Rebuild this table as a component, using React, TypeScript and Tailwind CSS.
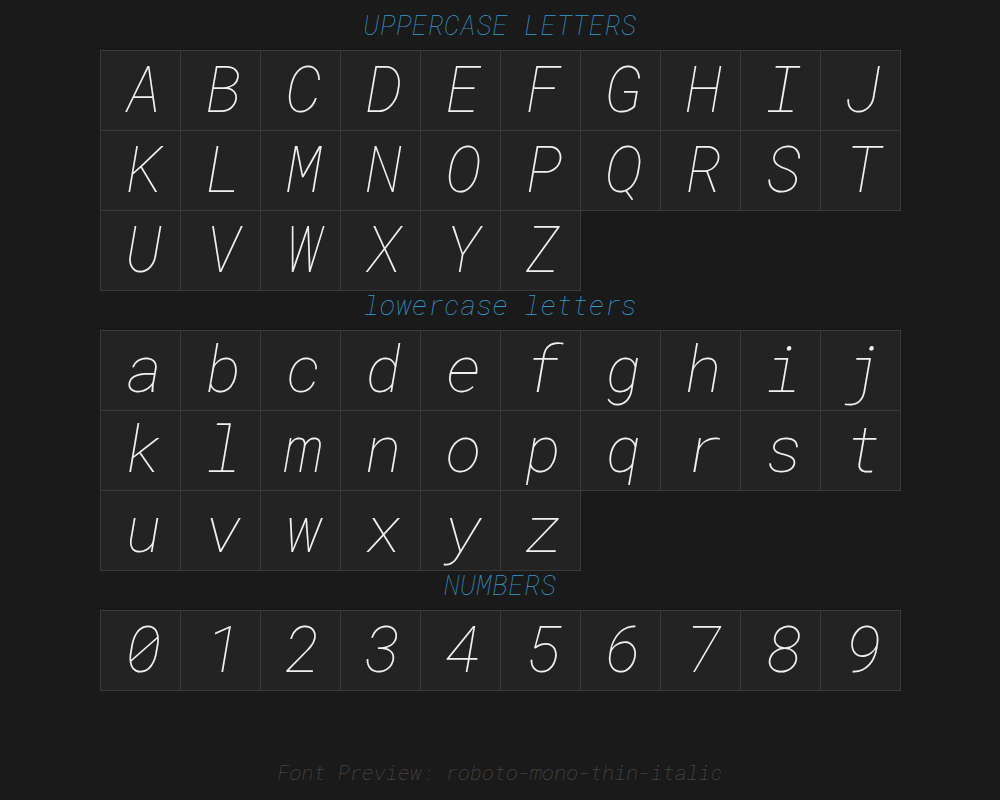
import React from 'react';

const upper = 'ABCDEFGHIJKLMNOPQRSTUVWXYZ'.split('');
const lower = 'abcdefghijklmnopqrstuvwxyz'.split('');
const digits = '0123456789'.split('');

const mono = { fontFamily: "'Roboto Mono', Roboto, 'DejaVu Sans Mono', monospace" };

const Section: React.FC<{ title: string; chars: string[] }> = ({ title, chars }) => (
  <>
    <h2 className="w-[801px] h-10 leading-[26px] border-b border-[#3a3a3a] text-[27.4px] font-thin italic text-[#3a98cd] text-center">
      {title}
    </h2>
    <div className="grid grid-cols-[repeat(10,80px)] w-[801px] border-l border-[#3a3a3a]">
      {chars.map((c) => (
        <div
          key={c}
          className="h-20 flex items-center justify-center pb-[7px] pl-[7px] bg-[#232323] border-r border-b border-[#3a3a3a] text-[64px] font-thin italic text-[#f0f0f0]"
        >
          {c}
        </div>
      ))}
    </div>
  </>
);

export default function App() {
  return (
    <div
      className="w-[1000px] h-[800px] bg-[#1a1a1a] flex flex-col items-center pt-[11px]"
      style={mono}
    >
      <Section title="UPPERCASE LETTERS" chars={upper} />
      <Section title="lowercase letters" chars={lower} />
      <Section title="NUMBERS" chars={digits} />
      <div className="mt-auto mb-[12px] h-[30px] leading-[30px] text-[20.5px] font-thin italic text-[#555555]">
        Font Preview: roboto-mono-thin-italic
      </div>
    </div>
  );
}
